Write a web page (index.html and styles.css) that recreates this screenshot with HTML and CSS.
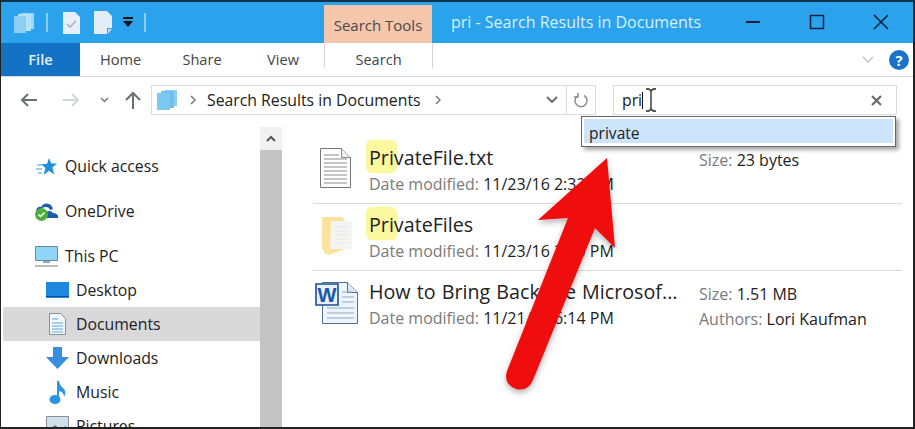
FILE: index.html
```html
<!doctype html>
<html>
<head>
<title>pri - Search Results in Documents</title>
<link rel="stylesheet" href="styles.css">
</head>
<body>
<div class="window">

<div class="titlebar">
  <div class="qat">
    <svg class="qat-icon" width="20" height="20" viewBox="0 0 20 20"><path d="M7 0h13v16H7z" fill="#9ad6f5"/><path d="M4 1h13v17H4z" fill="#b6e2f8"/><path d="M0 3h12v17H0z" fill="#8ccff2"/></svg>
    <span class="qat-sep"></span>
    <svg class="qat-check" width="17" height="22" viewBox="0 0 17 22"><path d="M0 0h12l5 5v17H0z" fill="#e6eef8"/><path d="M4 12l3 3 6-6" fill="none" stroke="#9fb0c2" stroke-width="1.500"/></svg>
    <svg class="qat-page" width="18" height="23" viewBox="0 0 18 23"><path d="M0 0h13l5 5v12h-5v6H0z" fill="#e3edf8"/><path d="M14 18h4l-4 5z" fill="#c3d7ea"/></svg>
    <svg class="qat-drop" width="10" height="11" viewBox="0 0 10 11"><path d="M0 0h10v2H0z" fill="#111"/><path d="M0 4h10L5 10z" fill="#111"/></svg>
    <span class="qat-sep"></span>
  </div>
  <div class="context-tab">Search Tools</div>
  <div class="title">pri - Search Results in Documents</div>
  <div class="caption">
    <svg width="16" height="16" viewBox="0 0 16 16"><path d="M1 8h14" stroke="#10203a" stroke-width="2"/></svg>
    <svg width="16" height="16" viewBox="0 0 16 16"><path d="M1.500 1.500h13v13h-13z" fill="none" stroke="#10203a" stroke-width="1.500"/></svg>
    <svg width="16" height="16" viewBox="0 0 16 16"><path d="M1 1l14 14M15 1L1 15" stroke="#10203a" stroke-width="1.500"/></svg>
  </div>
</div>

<div class="ribbon">
  <div class="tab tab-file">File</div>
  <div class="tab tab-home">Home</div>
  <div class="tab tab-share">Share</div>
  <div class="tab tab-view">View</div>
  <div class="tab tab-search">Search</div>
  <div class="ribbon-end">
    <svg width="12" height="7" viewBox="0 0 12 7"><path d="M1 1l5 5 5-5" fill="none" stroke="#b9bec4" stroke-width="1.300"/></svg>
    <span class="help">?</span>
  </div>
</div>

<div class="addressrow">
  <div class="navbtns">
    <svg width="18" height="16" viewBox="0 0 18 16"><path d="M17 8H2M8 2L2 8l6 6" fill="none" stroke="#6b6f73" stroke-width="2"/></svg>
    <svg class="nav-fwd" width="18" height="16" viewBox="0 0 18 16"><path d="M1 8h15M10 2l6 6-6 6" fill="none" stroke="#d4d6d8" stroke-width="2"/></svg>
    <svg class="nav-recent" width="9" height="6" viewBox="0 0 9 6"><path d="M1 1l3.500 3.500L8 1" fill="none" stroke="#777" stroke-width="1.500"/></svg>
    <svg class="nav-up" width="16" height="18" viewBox="0 0 16 18"><path d="M8 18V2M1 9l7-7 7 7" fill="none" stroke="#6b6f73" stroke-width="2"/></svg>
  </div>
  <div class="addressbar">
    <svg width="20" height="20" viewBox="0 0 20 20"><path d="M7 0h13v16H7z" fill="#8fd0f2"/><path d="M4 1h13v17H4z" fill="#6fc0ee"/><path d="M0 3h13v17H0z" fill="#7cc8f1"/></svg>
    <svg class="chev" width="6" height="10" viewBox="0 0 6 10"><path d="M1 1l4 4-4 4" fill="none" stroke="#777" stroke-width="1.500"/></svg>
    <span class="addr-text">Search Results in Documents</span>
    <svg class="chev" width="6" height="10" viewBox="0 0 6 10"><path d="M1 1l4 4-4 4" fill="none" stroke="#777" stroke-width="1.500"/></svg>
    <svg class="addr-drop" width="12" height="8" viewBox="0 0 12 8"><path d="M1 1l5 5 5-5" fill="none" stroke="#666" stroke-width="1.800"/></svg>
    <span class="addr-refresh">
      <svg width="16" height="17" viewBox="0 0 16 17"><path d="M5 3.500a6 6 0 1 0 6 0M5 1v4H1" fill="none" stroke="#8a8d90" stroke-width="1.500"/></svg>
    </span>
  </div>
  <div class="searchbox">
    <span>pri</span><span class="caret"></span>
    <svg class="x" width="11" height="11" viewBox="0 0 11 11"><path d="M1 1l9 9M10 1L1 10" stroke="#666" stroke-width="2"/></svg>
  </div>
</div>

<div class="main">
  <div class="nav">
    <div class="nav-item top">
      <span class="nav-icon"><svg width="21" height="17" viewBox="0 0 21 17"><path d="M13 0l2.200 5.500H21l-4.700 4 2 7-5.300-3.800L7.500 17l2-7L5 6h6z" fill="#1f8fdc"/><path d="M1 7h6M0 11h6M2 15h4" stroke="#7cc0ec" stroke-width="1.300"/></svg></span>
      <span>Quick access</span>
    </div>
    <div class="nav-item top">
      <span class="nav-icon"><svg width="23" height="19" viewBox="0 0 23 19"><path d="M1 9q1-5 5-4 3-5 8-3 3 1 4 5l-3 1q-1-3-4-3-4 0-5 3-3 0-5 1z" fill="#1b5fae"/><path d="M9 12q1-3 5-3 3 0 4 2 4 0 5 3v2H9z" fill="#1b5fae"/><circle cx="6.500" cy="12.500" r="6.500" fill="#4caf3c"/><path d="M3.500 12.500l2 2 4-4" fill="none" stroke="#fff" stroke-width="1.500"/></svg></span>
      <span>OneDrive</span>
    </div>
    <div class="nav-item">
      <span class="nav-icon"><svg width="23" height="21" viewBox="0 0 23 21"><path d="M.5.500h22v14H.500z" fill="#8fd6f6" stroke="#6a8aa0"/><path d="M8 15h7v2H8z" fill="#a0a8b0"/><path d="M0 20h23" stroke="#a0a8b0" stroke-width="1.500"/></svg></span>
      <span>This PC</span>
    </div>
    <div class="nav-item sub">
      <span class="nav-icon"><svg width="23" height="16" viewBox="0 0 23 16"><path d="M0 0h23v16H0z" fill="#1e88e0"/><path d="M0 14.500h23" stroke="#0d4f95"/></svg></span>
      <span>Desktop</span>
    </div>
    <div class="nav-item sub selected">
      <span class="nav-icon"><svg width="17" height="22" viewBox="0 0 17 22"><path d="M.5.500h11l5 5v16H.500z" fill="#f4f8fb" stroke="#8a9096"/><path d="M3 6h6M3 10h11M3 13h11M3 16h11M3 19h11" stroke="#5ba8dc"/></svg></span>
      <span>Documents</span>
    </div>
    <div class="nav-item sub">
      <span class="nav-icon"><svg width="23" height="22" viewBox="0 0 23 22"><path d="M7 0h9v10h7L11.500 22 0 10h7z" fill="#3a8ede"/></svg></span>
      <span>Downloads</span>
    </div>
    <div class="nav-item sub">
      <span class="nav-icon"><svg width="17" height="23" viewBox="0 0 17 23"><ellipse cx="6" cy="18.500" rx="5.500" ry="4.500" fill="#2a97e0"/><path d="M8 19V0h2q1 5 4 7 4 3 1 9 0-5-5-6v9z" fill="#2a97e0"/></svg></span>
      <span>Music</span>
    </div>
    <div class="nav-item sub">
      <span class="nav-icon"><svg width="23" height="20" viewBox="0 0 23 20"><path d="M.5.500h22v19H.500z" fill="#cfe0ea" stroke="#8a9096"/><path d="M3 14l6-5 5 4 6-3v7H3z" fill="#5f7d6a"/></svg></span>
      <span>Pictures</span>
    </div>
  </div>
  <div class="scrollbar">
    <div class="scroll-up"><svg width="10" height="7" viewBox="0 0 10 7"><path d="M1 6l4-4 4 4" fill="none" stroke="#555" stroke-width="2"/></svg></div>
    <div class="scroll-thumb"></div>
  </div>
  <div class="results">
    <div class="result">
      <div class="icon-slot">
        <svg class="icon-txt" width="31" height="40" viewBox="0 0 31 40"><path d="M.5.500h21l9 9v30H.500z" fill="#fff" stroke="#777"/><path d="M21.500.500v9h9" fill="#eee" stroke="#888"/><path d="M4 7h15M4 11h23M4 15h23M4 19h23M4 23h23M4 27h23M4 31h23M4 35h23" stroke="#8c8c8c"/></svg>
      </div>
      <div class="info">
        <div class="name"><mark>Pri</mark>vateFile.txt</div>
        <div class="meta"><span class="label">Date modified:</span> 11/23/16 2:32 PM</div>
      </div>
      <div class="info-right">
        <div class="meta"><span class="label">Size:</span> 23 bytes</div>
      </div>
    </div>
    <div class="result">
      <div class="icon-slot">
        <svg class="icon-folder" width="30" height="39" viewBox="0 0 30 39"><path d="M0 1h20l3 4v28L7 39l-4-1-3-6z" fill="#fbe39d"/><path d="M9 5h21v28H8z" fill="#f4f4f2"/><path d="M13 11h13M13 15h13M13 19h13M13 23h13M13 27h13" stroke="#e6e6e4"/></svg>
      </div>
      <div class="info">
        <div class="name"><mark>Pri</mark>vateFiles</div>
        <div class="meta"><span class="label">Date modified:</span> 11/23/16 2:30 PM</div>
      </div>
    </div>
    <div class="result">
      <div class="icon-slot">
        <svg class="icon-doc" width="43" height="42" viewBox="0 0 43 42"><path d="M7.500.500h25l10 10v31h-35z" fill="#edf4fb" stroke="#4c6f96"/><path d="M32.500.500v10h10" fill="#dce9f6" stroke="#4c6f96"/><path d="M27 10h10M27 15h12M27 20h12M12 26h27M12 31h27M12 36h27" stroke="#8fabc9"/><path d="M1 2h22v21H1z" fill="#e8f0fa" stroke="#1f4f8f" stroke-width="1.600"/><text class="word-w" x="12" y="20" text-anchor="middle">W</text></svg>
      </div>
      <div class="info">
        <div class="name">How to Bring Back the Microsof...</div>
        <div class="meta"><span class="label">Date modified:</span> 11/21/16 6:14 PM</div>
      </div>
      <div class="info-right">
        <div class="meta"><span class="label">Size:</span> 1.51 MB</div>
        <div class="meta"><span class="label">Authors:</span> Lori Kaufman</div>
      </div>
    </div>
  </div>
</div>

<!-- things lying over the window -->
<div class="suggest"><div class="suggest-item">private</div></div>
<svg class="ibeam" width="12" height="24" viewBox="0 0 12 24"><path d="M1 1h3l2 2 2-2h3M1 23h3l2-2 2 2h3M6 3v18" fill="none" stroke="#222" stroke-width="1.300"/></svg>
<svg class="arrow" width="915" height="429" viewBox="0 0 915 429">
  <defs><filter id="sh" x="-20%" y="-20%" width="140%" height="140%"><feDropShadow dx="0" dy="3" stdDeviation="3" flood-color="#000" flood-opacity=".3"/></filter></defs>
  <path d="M607 158L538 220L568 218L507 371Q503 384 516 389Q528 392 533 380L595 228L615 248Z" fill="#ef0b0b" filter="url(#sh)"/>
</svg>
</div>
</body>
</html>
```
FILE: styles.css
```css
html, body {
  margin: 0;
  padding: 0;
  height: 100%;
  overflow: hidden;
}
body {
  background: #fff;
  color: #1a1a1a;
  font-family: "Open Sans", "Noto Sans", sans-serif;
  font-size: 16px;
}
svg { display: block; flex: none; }

.window {
  position: relative;
  width: 915px;
  height: 429px;
  box-sizing: border-box;
  border-top: 2px solid #12324d;
  border-left: 1px solid #222;
  border-right: 2px solid #222;
  border-bottom: 2px solid #222;
  display: flex;
  flex-direction: column;
  overflow: hidden;
}

/* title bar */
.titlebar {
  height: 41px;
  flex: none;
  background: #2aa3ec;
  display: flex;
  align-items: center;
}
.qat {
  width: 323px;
  flex: none;
  display: flex;
  align-items: center;
  padding-left: 13px;
  box-sizing: border-box;
}
.qat-sep {
  width: 2px;
  height: 19px;
  margin: 0 15px 0 12px;
  background: #8ccdf3;
}
.qat-page { margin-left: 14px; }
.qat-drop { margin-left: 11px; }
.qat-drop + .qat-sep { margin-left: 11px; }
.context-tab {
  width: 108px;
  height: 38px;
  align-self: flex-end;
  background: #f4c6ab;
  color: #4a4a4a;
  text-align: center;
  line-height: 40px;
  font-size: 15px;
}
.title {
  flex: 1;
  padding-left: 19px;
  padding-bottom: 2px;
  color: #d8f1fd;
  font-size: 16px;
  white-space: nowrap;
}
.caption {
  display: flex;
  gap: 48px;
  padding-right: 24px;
  align-items: center;
  padding-bottom: 2px;
}

/* ribbon */
.ribbon {
  height: 33px;
  flex: none;
  display: flex;
  border-bottom: 1px solid #dadbdc;
  font-size: 14.6px;
  color: #444;
}
.tab {
  line-height: 33px;
  text-align: center;
}
.tab-file {
  width: 79px;
  background: #1372c4;
  color: #e4f0fa;
  font-weight: 600;
}
.tab-home { width: 81px; }
.tab-share { width: 82px; }
.tab-view { width: 80px; }
.tab-search {
  width: 107px;
  height: 25px;
  margin-left: 1px;
  border-left: 1px solid #d5d5d5;
  border-right: 1px solid #d5d5d5;
}
.ribbon-end {
  margin-left: auto;
  display: flex;
  align-items: center;
  gap: 15px;
  padding-right: 4px;
}
.help {
  width: 20px;
  height: 20px;
  border-radius: 50%;
  background: #1a73c8;
  color: #fff;
  font-weight: 700;
  font-size: 15px;
  line-height: 20px;
  text-align: center;
}

/* address row */
.addressrow {
  height: 48px;
  flex: none;
  display: flex;
  align-items: center;
  box-sizing: border-box;
  padding-bottom: 2px;
}
.navbtns {
  width: 150px;
  flex: none;
  display: flex;
  align-items: center;
  box-sizing: border-box;
  padding-left: 19px;
}
.nav-fwd { margin-left: 24px; }
.nav-recent { margin-left: 20px; }
.nav-up { margin-left: 16px; }
.addressbar {
  width: 445px;
  height: 30px;
  flex: none;
  box-sizing: border-box;
  border: 1px solid #dcdcdc;
  display: flex;
  align-items: center;
  padding-left: 5px;
}
.chev { margin-left: 13px; }
.addr-text {
  margin-left: 11px;
  font-size: 15.8px;
  color: #222;
  white-space: nowrap;
  padding-bottom: 1px;
}
.addr-text + .chev { margin-left: 14px; }
.addr-drop { margin-left: auto; margin-right: 8px; }
.addr-refresh {
  width: 28px;
  height: 28px;
  border-left: 1px solid #dcdcdc;
  display: flex;
  align-items: center;
  justify-content: center;
}
.searchbox {
  width: 284px;
  height: 30px;
  flex: none;
  margin-left: 17px;
  box-sizing: border-box;
  border: 1px solid #dcdcdc;
  display: flex;
  align-items: center;
  padding: 0 14px 0 8px;
  font-size: 15.8px;
}
.caret { width: 1px; height: 17px; background: #111; }
.x { margin-left: auto; }

/* nav pane and results */
.main {
  flex: 1;
  display: flex;
  min-height: 0;
}
.nav {
  width: 259px;
  flex: none;
  padding-top: 24px;
  padding-left: 2px;
  box-sizing: border-box;
}
.nav-item {
  display: flex;
  align-items: center;
  gap: 7px;
  height: 34px;
  padding-left: 32px;
  color: #222;
  font-size: 15.8px;
  line-height: 32px;
  white-space: nowrap;
}
.nav-icon {
  width: 23px;
  flex: none;
  display: flex;
  justify-content: center;
}
.nav-item.top { margin-bottom: 11px; }
.nav-item.sub { padding-left: 43px; }
.nav-item.selected { background: #d9d9d9; }
.scrollbar {
  width: 22px;
  flex: none;
  margin-top: 2px;
  display: flex;
  flex-direction: column;
  background: #c4c4c4;
}
.scroll-up {
  height: 23px;
  background: #f1f1f1;
  display: flex;
  align-items: center;
  justify-content: center;
}
.scroll-thumb { flex: 1; }

.results {
  flex: 1;
  padding: 12px 11px 0 31px;
  min-width: 0;
}
.result {
  height: 67px;
  box-sizing: border-box;
  display: flex;
  border-bottom: 1px solid #dcdcdc;
}
.result:last-child { border-bottom: 0; }
.icon-slot { width: 56px; flex: none; }
.icon-txt { margin: 11px 0 0 7px; }
.icon-folder { margin: 12px 0 0 9px; }
.icon-doc { margin: 11px 0 0 2px; }
.info { width: 330px; flex: none; padding-top: 8px; }
.info-right { padding-top: 11px; }
.info-right .meta { line-height: 25px; }
.name {
  font-size: 19.7px;
  line-height: 26px;
  word-spacing: 1px;
  color: #222;
  white-space: nowrap;
}
mark {
  background: #fbf8a0;
  box-shadow: 0 0 2px #fbf8a0;
  color: inherit;
  border-radius: 6px;
  padding: 4px 3px 2px;
  margin: 0 -3px;
}
.meta {
  font-size: 16px;
  line-height: 26px;
  color: #222;
  white-space: nowrap;
}
.label { color: #7a7a7a; }
.word-w {
  font-family: "Liberation Sans", sans-serif;
  font-weight: 700;
  font-size: 20px;
  fill: #1c57a8;
}

/* overlays */
.suggest {
  position: absolute;
  left: 580px;
  top: 114px;
  width: 315px;
  height: 31px;
  box-sizing: border-box;
  background: #fff;
  border: 1px solid #666;
  box-shadow: 3px 3px 4px rgba(0,0,0,.35);
  padding: 2px 2px 3px;
}
.suggest-item {
  background: #cce5fb;
  height: 100%;
  padding-left: 5px;
  font-size: 15.6px;
  line-height: 28px;
  color: #222;
}
.ibeam {
  position: absolute;
  left: 644px;
  top: 86px;
}
.arrow {
  position: absolute;
  left: -1px;
  top: -2px;
  pointer-events: none;
}
```
